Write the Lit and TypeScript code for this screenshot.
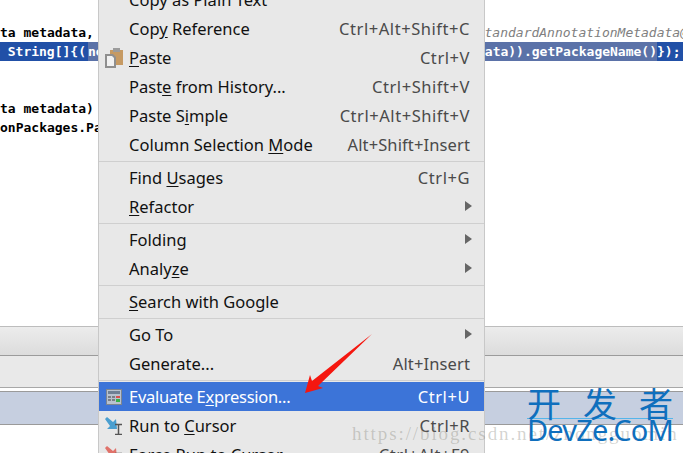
import { LitElement, html, css, svg } from "lit";
import { customElement } from "lit/decorators.js";

type Row = { sep?: boolean; pre?: string; u?: string; post?: string; key?: string; sub?: boolean; icon?: string; active?: boolean };

const ROWS: Row[] = [
  { pre: "Copy as Plain Text" },
  { pre: "Cop", u: "y", post: " Reference", key: "Ctrl+Alt+Shift+C" },
  { pre: "", u: "P", post: "aste", key: "Ctrl+V", icon: "paste" },
  { pre: "Past", u: "e", post: " from History...", key: "Ctrl+Shift+V" },
  { pre: "Paste S", u: "i", post: "mple", key: "Ctrl+Alt+Shift+V" },
  { pre: "Column Selection ", u: "M", post: "ode", key: "Alt+Shift+Insert" },
  { sep: true },
  { pre: "Find ", u: "U", post: "sages", key: "Ctrl+G" },
  { pre: "", u: "R", post: "efactor", sub: true },
  { sep: true },
  { pre: "Folding", sub: true },
  { pre: "Analy", u: "z", post: "e", sub: true },
  { sep: true },
  { pre: "", u: "S", post: "earch with Google" },
  { sep: true },
  { pre: "Go To", sub: true },
  { pre: "Generate...", key: "Alt+Insert" },
  { sep: true },
  { pre: "Evaluate E", u: "x", post: "pression...", key: "Ctrl+U", icon: "calc", active: true },
  { pre: "Run to ", u: "C", post: "ursor", key: "Ctrl+R", icon: "run" },
  { pre: "Force Run to Cursor", key: "Ctrl+Alt+F9", icon: "force" },
];

const ICONS: Record<string, unknown> = {
  paste: svg`<svg class="ico" viewBox="0 0 18 20" width="18" height="20">
    <rect x="5" y="2" width="13" height="15" fill="#c69a63"/>
    <rect x="8" y="0" width="7" height="4" fill="#9c9c9c"/>
    <path d="M0 6h8l3 3v11H0z" fill="#8f8f8f"/>
    <path d="M2 8h5l2 2v8H2z" fill="#f2f2f2"/>
  </svg>`,
  calc: svg`<svg class="ico" viewBox="0 0 16 16" width="16" height="16">
    <rect x="0.5" y="0.5" width="15" height="15" fill="#b8c2cf" stroke="#7d8590"/>
    <rect x="2" y="2" width="12" height="3" fill="#6f8094"/>
    <rect x="2" y="7" width="3" height="2" fill="#7a7f86"/><rect x="6" y="7" width="3" height="2" fill="#7a7f86"/><rect x="10" y="7" width="4" height="2" fill="#d9534f"/>
    <rect x="2" y="10" width="3" height="2" fill="#7a7f86"/><rect x="6" y="10" width="3" height="2" fill="#7a7f86"/><rect x="10" y="10" width="4" height="3" fill="#35b34a"/>
  </svg>`,
  run: svg`<svg class="ico" viewBox="0 0 18 18" width="18" height="18">
    <polygon points="2,0 8,5 11,2 12,12 2,12 5,9 0,2" fill="#4a9fd0"/>
    <path d="M10 7.5h7M10 17.5h7M13.5 8v9" stroke="#555" stroke-width="1.5" fill="none"/>
  </svg>`,
  force: svg`<svg class="ico" viewBox="0 0 18 18" width="18" height="18">
    <polygon points="2,0 8,5 11,2 12,12 2,12 5,9 0,2" fill="#e0726a"/>
    <path d="M10 7.5h7M10 17.5h7M13.5 8v9" stroke="#555" stroke-width="1.5" fill="none"/>
  </svg>`,
};

@customElement("app-root")
export class AppRoot extends LitElement {
  static styles = css`
    :host { display: block; width: 683px; height: 453px; overflow: hidden; position: relative; background: #fff; }
    .page { display: flex; flex-direction: column; height: 453px; }
    .code { height: 326px; flex: none; box-sizing: border-box; padding-top: 23px; font: bold 13px/19px "DejaVu Sans Mono", monospace; color: #000; }
    .line { height: 19px; display: flex; overflow: hidden; white-space: pre; }
    .line.sel { background: #2150a7; color: #fff; }
    .gap { height: 38px; }
    .hint { margin-left: auto; margin-right: -5px; font-weight: normal; font-style: italic; color: #808080; }
    .sel-left { width: 86px; padding-right: 2px; flex: none; text-align: right; overflow: hidden; direction: rtl; }
    .sel-mid { width: 569px; flex: none; overflow: hidden; background: #5b72a8; display: flex; justify-content: space-between; }
    .sel-end { flex: 1; }
    .bar1 { height: 28px; flex: none; border-top: 1px solid #bdbdbd; border-bottom: 1px solid #9b9b9b; background: linear-gradient(#ececec, #dcdcdc); }
    .bar2 { height: 31px; flex: none; background: #e9e9e9; border-bottom: 1px solid #a8a8a8; }
    .bar3 { height: 3px; flex: none; background: #fff; border-bottom: 1px solid #9a9a9a; }
    .bar4 { height: 32px; flex: none; background: #c6cfe0; border-bottom: 1px solid #9a9a9a; }
    .bar5 { flex: 1; background: #fff; }

    .menu { position: absolute; left: 98px; top: -15px; width: 385px; background: #e8e8e8; border-left: 1px solid #c8c8c8; border-right: 1px solid #c8c8c8; font: 16.5px/29px "Noto Sans", sans-serif; color: #111; }
    .row { height: 29px; display: flex; align-items: center; position: relative; white-space: nowrap; }
    .row.active { background: #3c74d8; color: #fff; }
    .label { margin-left: 30px; }
    .row.active .label { letter-spacing: -0.28px; }
    .label u { text-underline-offset: 2px; }
    .key { margin-left: auto; margin-right: 14px; color: #4a4a4a; letter-spacing: 0.55px; }
    .key.alt { letter-spacing: 0.12px; }
    .row.active .key { color: #fff; }
    .arrow { position: absolute; right: 12px; top: 9px; width: 0; height: 0; border-left: 7px solid #666; border-top: 5.5px solid transparent; border-bottom: 5.5px solid transparent; }
    .sep { height: 4px; display: flex; align-items: center; }
    .sep::before { content: ""; flex: 1; height: 1px; background: #cfcfcf; }
    .icon-slot { position: absolute; left: 0; top: 0; width: 30px; height: 29px; display: flex; align-items: center; justify-content: center; }
    .ico { display: block; }

    .red { position: absolute; left: 300px; top: 330px; }
    .wm { position: absolute; left: 352px; top: 423px; font: 19px/22px "Liberation Serif", serif; letter-spacing: 1.9px; color: rgba(120,120,110,.33); white-space: nowrap; }
    .logo { position: absolute; left: 527px; top: 387px; width: 146px; color: #0f6fbd; }
    .cn { display: flex; justify-content: space-between; font: 34px/31px "Noto Sans CJK SC", sans-serif; border-bottom: 1px solid #55b5ea; height: 31px; }
    .en { margin-top: -6px; font: 29px/33px "Noto Sans", sans-serif; letter-spacing: -0.8px; white-space: nowrap; }
  `;

  private renderRow(r: Row) {
    if (r.sep) return html`<div class="sep"></div>`;
    return html`<div class="row ${r.active ? "active" : ""}">
      ${r.icon ? html`<span class="icon-slot">${ICONS[r.icon]}</span>` : ""}
      <span class="label">${r.pre}${r.u ? html`<u>${r.u}</u>` : ""}${r.post ?? ""}</span>
      ${r.key ? html`<span class="key ${r.key.startsWith("Alt") ? "alt" : ""}">${r.key}</span>` : ""}
      ${r.sub ? html`<span class="arrow"></span>` : ""}
    </div>`;
  }

  render() {
    return html`
      <div class="page">
        <div class="code">
          <div class="line"><span>ta metadata,</span><span class="hint">tandardAnnotationMetadata@</span></div>
          <div class="line sel"><span class="sel-left"><bdi>r String[]{(</bdi></span><span class="sel-mid"><span>ne</span><span>ata)).getPackageName()</span></span><span class="sel-end">});</span></div>
          <div class="gap"></div>
          <div class="line"><span>ta metadata)</span></div>
          <div class="line"><span>onPackages.Pa</span></div>
        </div>
        <div class="bar1"></div>
        <div class="bar2"></div>
        <div class="bar3"></div>
        <div class="bar4"></div>
        <div class="bar5"></div>
      </div>
      <div class="menu">${ROWS.map((r) => this.renderRow(r))}</div>
      <svg class="red" width="80" height="70" viewBox="300 330 80 70">
        <polygon points="372,334 318,386 323,388 305,393 310,375 312,381" fill="#f5170f"/>
      </svg>
      <div class="wm">https://blog.csdn.net/zhongguomin</div>
      <div class="logo">
        <div class="cn"><span>开</span><span>发</span><span>者</span></div>
        <div class="en">DevZe.CoM</div>
      </div>
    `;
  }
}
